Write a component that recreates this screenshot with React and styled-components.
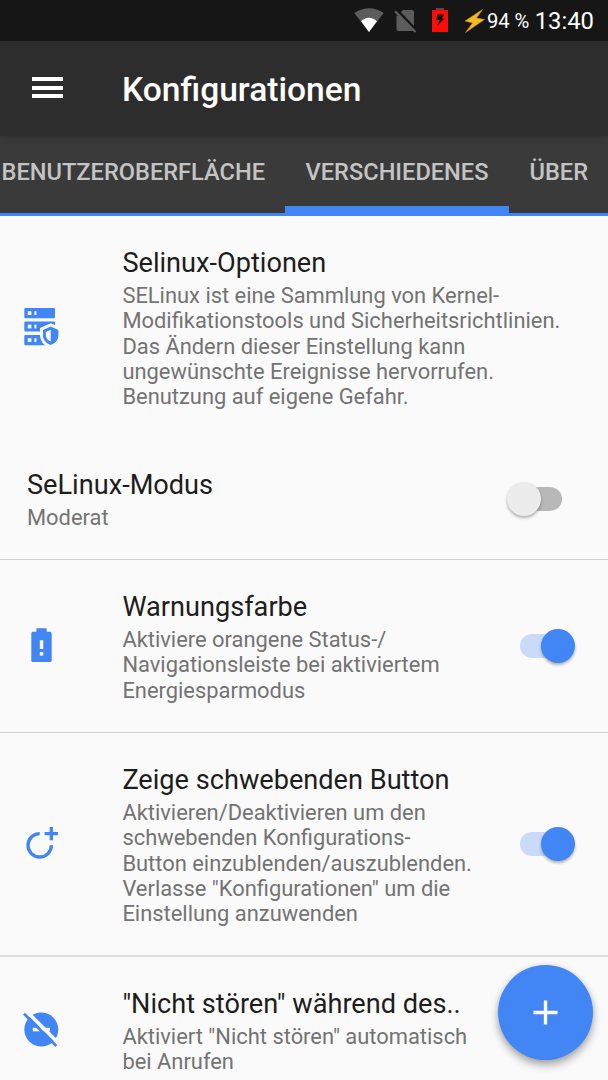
import React from 'react';
import styled, { createGlobalStyle } from 'styled-components';

const GlobalStyle = createGlobalStyle`
  * {
    box-sizing: border-box;
  }

  body {
    margin: 0;
    overflow: hidden;
    font-family: Roboto, sans-serif;
    background-color: #fafafa;
  }
`;

const Screen = styled.div`
  width: 608px;
  height: 1080px;
  display: flex;
  flex-direction: column;
  overflow: hidden;
  background-color: #fafafa;
`;

const StatusBar = styled.header`
  flex: none;
  height: 41px;
  display: flex;
  align-items: center;
  justify-content: flex-end;
  padding-right: 14px;
  background-color: #161616;
  color: #ffffff;
`;

const StatusIcon = styled.svg`
  display: block;
  flex: none;
  width: ${props => props.$width}px;
  height: 41px;
  margin-right: ${props => props.$gap}px;
`;

const Battery = styled.span`
  width: 42px;
  margin-right: 5px;
  font-size: 20.2px;
  letter-spacing: -0.1px;
  white-space: nowrap;
`;

const Clock = styled.span`
  width: 60px;
  padding-top: 1px;
  font-size: 23.8px;
  text-align: right;
`;

const Toolbar = styled.div`
  flex: none;
  position: relative;
  height: 95px;
  display: flex;
  align-items: center;
  padding: 0 32px;
  background-color: #2d2d2d;
  box-shadow: 0 1px 7px rgba(0, 0, 0, 0.2);
`;

const MenuButton = styled.button`
  width: 31px;
  height: 21px;
  display: flex;
  flex-direction: column;
  justify-content: space-between;
  margin: 0 59px 2px 0;
  padding: 0;
  border: none;
  background: none;
`;

const MenuLine = styled.span`
  height: 4px;
  background-color: #ffffff;
`;

const PageTitle = styled.h1`
  margin: 2px 0 0;
  font-size: 33.6px;
  font-weight: 500;
  color: #ffffff;
`;

const Tabs = styled.nav`
  flex: none;
  height: 80px;
  display: flex;
  background-color: #3a3a3a;
  border-bottom: 3px solid #4285f4;
`;

const Tab = styled.a`
  flex: none;
  width: ${props => props.$width}px;
  display: flex;
  align-items: center;
  justify-content: ${props => props.$align || 'center'};
  padding: ${props => props.$padding || '0'};
  border-top: 1px solid transparent;
  border-bottom: 7px solid ${props => (props.$active ? '#4285f4' : 'transparent')};
  font-size: 23.6px;
  font-weight: 500;
  color: #c4c4c4;
  white-space: nowrap;
`;

const List = styled.main`
  display: flex;
  flex-direction: column;
`;

const Row = styled.section`
  flex: none;
  height: ${props => props.$height}px;
  display: flex;
  align-items: center;
  padding-left: ${props => (props.$plain ? 27 : 17)}px;
  padding-right: ${props => (props.$plain ? 46 : 33)}px;
  border-bottom: ${props => props.$divider || 'none'};
`;

const RowIcon = styled.svg`
  flex: none;
  width: 48px;
  height: 48px;
  margin-right: 57.4px;
  fill: #4285f4;
`;

const RowText = styled.div`
  flex: 1;
  min-width: 0;
  align-self: flex-start;
  padding-top: 31px;
  white-space: nowrap;
`;

const RowTitle = styled.h2`
  margin: 0 0 4px;
  font-size: 27.15px;
  line-height: 32px;
  font-weight: 400;
  color: #1d1d1d;
`;

const Summary = styled.p`
  margin: 0;
  font-size: 21.9px;
  line-height: 25.3px;
  color: #737373;
  white-space: pre-line;
`;

const Switch = styled.span`
  position: relative;
  flex: none;
  width: 55px;
  height: 34px;
  display: flex;
  align-items: center;
  justify-content: ${props => (props.$on ? 'flex-start' : 'flex-end')};
`;

const Track = styled.span`
  width: 48px;
  height: 24px;
  border-radius: 12px;
  background-color: ${props => (props.$on ? '#c9dbf8' : '#b8b8b8')};
`;

const Thumb = styled.span`
  position: absolute;
  top: 0;
  ${props => (props.$on ? 'right: 0;' : 'left: 0;')}
  width: 34px;
  height: 34px;
  border-radius: 50%;
  background-color: ${props => (props.$on ? '#4285f4' : '#ececec')};
  box-shadow: 0 2px 3px rgba(0, 0, 0, 0.3);
`;

const Fab = styled.button`
  position: absolute;
  left: 498px;
  top: 965px;
  width: 95px;
  height: 95px;
  display: flex;
  align-items: center;
  justify-content: center;
  padding: 0;
  border: none;
  border-radius: 50%;
  background-color: #4285f4;
  box-shadow: 0 5px 9px rgba(0, 0, 0, 0.32), 0 0 5px rgba(0, 0, 0, 0.1);
`;

const ServerShieldIcon = () => (
  <RowIcon viewBox="0 0 48 48">
    {[5, 18.4, 32].map(y => (
      <g key={y}>
        <rect x="7.3" y={y} width="30.7" height="10.2" rx="1" />
        <rect x="10.8" y={y + 3.2} width="3.6" height="3.8" fill="#fafafa" />
        <rect x="17.4" y={y + 3.2} width="2" height="3.8" fill="#fafafa" />
      </g>
    ))}
    <path
      d="M33.7 23.6 41.4 27v5.2c0 4.5-3.2 8.4-7.7 9.7-4.5-1.3-7.7-5.2-7.7-9.7V27z"
      fill="#fafafa"
      stroke="#fafafa"
      strokeWidth="6"
    />
    <path d="M33.7 23.6 41.4 27v5.2c0 4.5-3.2 8.4-7.7 9.7-4.5-1.3-7.7-5.2-7.7-9.7V27z" />
    <path d="M33.7 26.8v11.8c-3-1.1-4.9-3.7-4.9-6.6v-3z" fill="#fafafa" />
  </RowIcon>
);

const BatteryAlertIcon = () => (
  <RowIcon viewBox="0 0 48 48">
    <path d="M19.4 6.3h10.2v3.4h3.4c1 0 1.7.7 1.7 1.7v27c0 1-.7 1.7-1.7 1.7H16c-1 0-1.7-.7-1.7-1.7v-27c0-1 .7-1.7 1.7-1.7h3.4z" />
    <path d="M22.8 18.3h3.5v8.8h-3.5zM22.8 30h3.5v3.6h-3.5z" fill="#fafafa" />
  </RowIcon>
);

const FloatingIcon = () => (
  <RowIcon viewBox="0 0 48 48">
    <path
      d="M22.7 13.6a11.7 11.7 0 1 0 11.7 11.7M34.3 6.9v13.4M27.6 13.6H41"
      fill="none"
      stroke="#4285f4"
      strokeWidth="3.3"
    />
  </RowIcon>
);

const DoNotDisturbIcon = () => (
  <RowIcon viewBox="0 0 48 48">
    <circle cx="24.3" cy="23.5" r="17" />
    <path d="M15.8 21.8H33v3.5H15.8z" fill="#fafafa" />
    <path d="M9 4.7 43.5 39.2" stroke="#fafafa" strokeWidth="3.6" />
    <path d="M7 7.7 39.3 40" stroke="#4285f4" strokeWidth="2.7" />
  </RowIcon>
);

const settings = [
  {
    title: 'Selinux-Optionen',
    summary: `SELinux ist eine Sammlung von Kernel-
      Modifikationstools und Sicherheitsrichtlinien.
      Das Ändern dieser Einstellung kann
      ungewünschte Ereignisse hervorrufen.
      Benutzung auf eigene Gefahr.`,
    icon: ServerShieldIcon,
    height: 222
  },
  {
    title: 'SeLinux-Modus',
    summary: 'Moderat',
    toggle: 'off',
    height: 122,
    divider: '1px solid #d0d0d0'
  },
  {
    title: 'Warnungsfarbe',
    summary: `Aktiviere orangene Status-/
      Navigationsleiste bei aktiviertem
      Energiesparmodus`,
    icon: BatteryAlertIcon,
    toggle: 'on',
    height: 173,
    divider: '1px solid #d0d0d0'
  },
  {
    title: 'Zeige schwebenden Button',
    summary: `Aktivieren/Deaktivieren um den
      schwebenden Konfigurations-
      Button einzublenden/auszublenden.
      Verlasse "Konfigurationen" um die
      Einstellung anzuwenden`,
    icon: FloatingIcon,
    toggle: 'on',
    height: 224,
    divider: '2px solid #dedede'
  },
  {
    title: '"Nicht stören" während des..',
    summary: `Aktiviert "Nicht stören" automatisch
      bei Anrufen`,
    icon: DoNotDisturbIcon,
    height: 146
  }
];

const App = () => {
  return (
    <Screen>
      <GlobalStyle />
      <StatusBar>
        <StatusIcon $width={30} $gap={10} viewBox="0 0 30 41">
          <path d="M.3 13C9 6.5 21 6.5 29.7 13L15 32z" fill="#5c5c5c" />
          <path d="M7.1 21.3c4.7-4.7 11.1-4.7 15.8 0L15 32z" fill="#ffffff" />
        </StatusIcon>
        <StatusIcon $width={24} $gap={14} viewBox="0 0 24 41">
          <path d="M9 10h9c1 0 2 .8 2 2v19H4.5c-1 0-2-.8-2-2V16.5z" fill="#5c5c5c" />
          <path d="M2.6 9.6 23 31" stroke="#161616" strokeWidth="2.6" />
          <path d="M1 11.2 21.5 32" stroke="#5c5c5c" strokeWidth="2.2" />
        </StatusIcon>
        <StatusIcon $width={16} $gap={16} viewBox="0 0 16 41">
          <path d="M4 8h8v3H4z" fill="#6b4034" />
          <path d="M0 10h16v22H0z" fill="#fb0d0d" />
          <path d="M5.5 14.5H12l-2 4h2.5l-7 7 2-5.500H4z" fill="#1a1010" />
        </StatusIcon>
        <StatusIcon $width={21} $gap={2} viewBox="0 0 21 41">
          <path d="M18.5 9.5 12.500 18l8 1.500L1.500 32.500 8.500 23 1 21z" fill="#f7b923" stroke="#c8862b" strokeWidth=".6" />
        </StatusIcon>
        <Battery>94 %</Battery>
        <Clock>13:40</Clock>
      </StatusBar>

      <Toolbar>
        <MenuButton aria-label="Menü">
          <MenuLine />
          <MenuLine />
          <MenuLine />
        </MenuButton>
        <PageTitle>Konfigurationen</PageTitle>
      </Toolbar>

      <Tabs>
        <Tab $width={285} $align="flex-end" $padding="0 20px 0 0">BENUTZEROBERFLÄCHE</Tab>
        <Tab $width={224} $active>VERSCHIEDENES</Tab>
        <Tab $width={99} $align="flex-start" $padding="0 0 0 20.5px">ÜBER</Tab>
      </Tabs>

      <List>
        {settings.map(({ title, summary, icon: Icon, toggle, height, divider }) => (
          <Row key={title} $height={height} $divider={divider} $plain={!Icon}>
            {Icon && <Icon />}
            <RowText>
              <RowTitle>{title}</RowTitle>
              <Summary>{summary}</Summary>
            </RowText>
            {toggle && (
              <Switch $on={toggle === 'on'}>
                <Track $on={toggle === 'on'} />
                <Thumb $on={toggle === 'on'} />
              </Switch>
            )}
          </Row>
        ))}
      </List>

      <Fab aria-label="Hinzufügen">
        <svg width="25" height="25" viewBox="0 0 25 25">
          <path d="M12.5 .5v24M.5 12.500h24" stroke="#ffffff" strokeWidth="3.4" />
        </svg>
      </Fab>
    </Screen>
  );
};

export default App;
